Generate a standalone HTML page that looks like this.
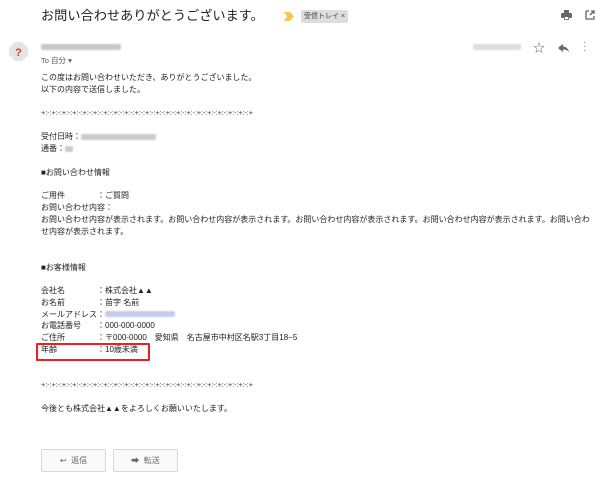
<!DOCTYPE html>
<html><head><meta charset="utf-8"><style>
body{margin:0;width:614px;height:484px;background:#fff;position:relative;overflow:hidden;font-family:"Liberation Sans","Noto Sans CJK JP",sans-serif;color:#222}
.a{position:absolute;white-space:nowrap}
.t{font-size:8px;line-height:12px;left:41px}
.l{display:inline-block;width:56px}
.blur{display:inline-block;height:6px;background:#ccc;border-radius:2px;vertical-align:middle;filter:blur(0.8px)}
.sep{font-size:7.6px;letter-spacing:-0.2px;color:#444}
.btn{position:absolute;top:449px;height:21px;border:1px solid #d8d8d8;border-radius:2px;background:#fafafa;font-size:8px;line-height:21px;color:#666;text-align:center}
</style></head><body>
<div class="a" style="left:41px;top:6px;font-size:13.2px;line-height:20px;color:#222">お問い合わせありがとうございます。</div>
<svg class="a" style="left:284px;top:12px" width="11" height="9"><path d="M0 0H6L10 4.5L6 9H0L3 4.5Z" fill="#f4c652"/></svg>
<div class="a" style="left:301px;top:10px;height:13px;padding:0 3px;background:#ddd;border-radius:2px;font-size:7px;line-height:13px;color:#444">受信トレイ ×</div>
<svg class="a" style="left:561px;top:10px" width="11" height="10"><rect x="3" y="0" width="5" height="3" fill="#666"/><rect x="0" y="3" width="11" height="5" rx="1" fill="#666"/><rect x="3" y="6" width="5" height="4" fill="#666"/><rect x="3.8" y="7" width="3.4" height="2.2" fill="#fff"/></svg>
<svg class="a" style="left:585px;top:10px" width="10" height="10"><path d="M1 1H4M1 1V9H9V6M5 5L9 1M6 1H9V4" stroke="#666" stroke-width="1.3" fill="none"/></svg>
<svg class="a" style="left:9px;top:42px" width="19" height="19"><polygon points="6,0 13,0 19,6 19,13 13,19 6,19 0,13 0,6" fill="#e4e4e4"/><text x="9.5" y="14" font-size="11" font-weight="bold" text-anchor="middle" fill="#d33" font-family="Liberation Sans">?</text></svg>
<span class="a blur" style="left:41px;top:44px;width:80px;background:#c8c8c8"></span>
<div class="a" style="left:41px;top:55px;font-size:7.5px;color:#555">To 自分 ▾</div>
<span class="a blur" style="left:473px;top:44px;width:48px;background:#dedede"></span>
<div class="a" style="left:533px;top:39px;font-size:12px;color:#666">☆</div>
<svg class="a" style="left:558px;top:44px" width="11" height="8"><path d="M5 0L0 4L5 8V5.5C8 5.5 10 6.5 11 8C10.5 5 8.5 3 5 2.5Z" fill="#666"/></svg>
<div class="a" style="left:583px;top:41px;font-size:10px;line-height:4px;color:#777">·<br>·<br>·</div>

<div class="a t" style="top:72px">この度はお問い合わせいただき、ありがとうございました。<br>以下の内容で送信しました。</div>
<div class="a t sep" style="top:107px">+:-:+:-:+:-:+:-:+:-:+:-:+:-:+:-:+:-:+:-:+:-:+:-:+:-:+:-:+:-:+:-:+:-:+:-:+:-:+:-:+</div>
<div class="a t" style="top:131px">受付日時：<span class="blur" style="width:75px;background:#ccc"></span><br>通番：<span class="blur" style="width:8px;background:#ccc"></span></div>
<div class="a t" style="top:167px">■お問い合わせ情報</div>
<div class="a t" style="top:190px"><span class="l">ご用件</span>：ご質問<br>お問い合わせ内容：<br>お問い合わせ内容が表示されます。お問い合わせ内容が表示されます。お問い合わせ内容が表示されます。お問い合わせ内容が表示されます。お問い合わ<br>せ内容が表示されます。</div>
<div class="a t" style="top:262px">■お客様情報</div>
<div class="a t" style="top:285px;line-height:11.8px"><span class="l">会社名</span>：株式会社▲▲<br><span class="l">お名前</span>：苗字 名前<br><span class="l">メールアドレス</span>：<span class="blur" style="width:70px;background:#c4ccec"></span><br><span class="l">お電話番号</span>：000-000-0000<br><span class="l">ご住所</span>：〒000-0000　愛知県　名古屋市中村区名駅3丁目18−5<br><span class="l">年齢</span>：10歳未満</div>
<div class="a" style="left:36px;top:343px;width:110px;height:14px;border:2.5px solid #f01e1e;border-radius:1px"></div>
<div class="a t sep" style="top:379px">+:-:+:-:+:-:+:-:+:-:+:-:+:-:+:-:+:-:+:-:+:-:+:-:+:-:+:-:+:-:+:-:+:-:+:-:+:-:+:-:+</div>
<div class="a t" style="top:403px">今後とも株式会社▲▲をよろしくお願いいたします。</div>
<div class="btn" style="left:41px;width:63px">↩&nbsp; 返信</div>
<div class="btn" style="left:113px;width:63px">➡&nbsp; 転送</div>
</body></html>
